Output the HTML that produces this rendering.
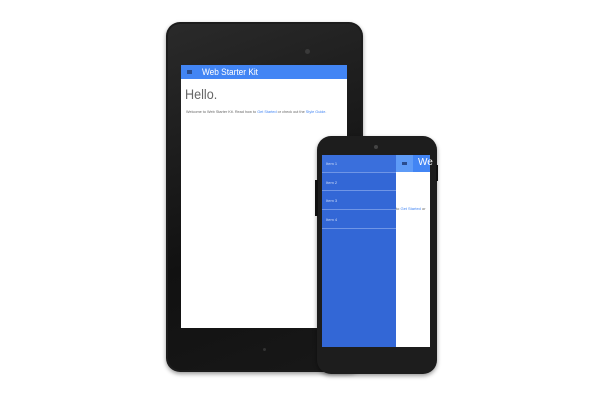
<!DOCTYPE html>
<html><head><style>
*{margin:0;padding:0;box-sizing:border-box}
body{width:600px;height:400px;background:#fff;position:relative;overflow:hidden;font-family:"Liberation Sans",sans-serif}
.a{position:absolute}
</style></head><body>
<!-- tablet -->
<div class="a" style="left:166px;top:22px;width:197px;height:350px;background:#1c1c1c;border-radius:14px;box-shadow:0 2px 4px rgba(0,0,0,.4)"></div>
<div class="a" style="left:168px;top:24px;width:193px;height:346px;background:linear-gradient(160deg,#2a2a2a,#111 60%,#181818);border-radius:12px"></div>
<div class="a" style="left:305px;top:49px;width:5px;height:5px;border-radius:50%;background:#3a3a3a"></div>
<div class="a" style="left:263px;top:348px;width:3px;height:3px;border-radius:50%;background:#333"></div>
<div class="a" style="left:181px;top:65px;width:166px;height:263px;background:#fff"></div>
<div class="a" style="left:181px;top:65px;width:166px;height:14px;background:#4285f4"></div>
<div class="a" style="left:187px;top:70px;width:5px;height:4px;background:#2a4d8f"></div>
<div class="a" style="left:202px;top:66px;font-size:9px;color:#fff;line-height:12px;transform:scaleX(.92);transform-origin:left">Web Starter Kit</div>
<div class="a" style="left:185px;top:86px;font-size:14px;color:#666;line-height:16px;transform:scaleX(.9);transform-origin:left">Hello.</div>
<div class="a" style="left:186px;top:110px;font-size:3.8px;color:#666;white-space:nowrap">Welcome to Web Starter Kit. Read how to <span style="color:#4285f4">Get Started</span> or check out the <span style="color:#4285f4">Style Guide</span>.</div>
<!-- phone -->
<div class="a" style="left:317px;top:136px;width:120px;height:238px;background:#1d1d1d;border-radius:14px;box-shadow:0 2px 4px rgba(0,0,0,.4)"></div>
<div class="a" style="left:315px;top:180px;width:3px;height:36px;background:#111"></div>
<div class="a" style="left:436px;top:165px;width:2px;height:16px;background:#111"></div>
<div class="a" style="left:374px;top:145px;width:4px;height:4px;border-radius:50%;background:#444"></div>
<div class="a" style="left:322px;top:155px;width:108px;height:192px;background:#fff"></div>
<div class="a" style="left:396px;top:155px;width:34px;height:17px;background:#4285f4"></div>
<div class="a" style="left:396px;top:155px;width:17px;height:17px;background:#5e9bf7"></div>
<div class="a" style="left:402px;top:162px;width:5px;height:3px;background:#2a4d8f"></div>
<div class="a" style="left:418px;top:157px;font-size:10px;color:#fff">We</div>
<div class="a" style="left:396px;top:206px;font-size:4px;color:#666;white-space:nowrap">to <span style="color:#4285f4">Get Started</span> or</div>
<div class="a" style="left:322px;top:155px;width:74px;height:192px;background:#3367d6"></div>
<div class="a" style="left:322px;top:155px;width:74px;height:17px;background:#3a6fdc"></div>
<div class="a" style="left:322px;top:172px;width:74px;height:1px;background:#6f95e6"></div>
<div class="a" style="left:322px;top:190px;width:74px;height:1px;background:#6f95e6"></div>
<div class="a" style="left:322px;top:209px;width:74px;height:1px;background:#6f95e6"></div>
<div class="a" style="left:322px;top:228px;width:74px;height:1px;background:#6f95e6"></div>
<div class="a" style="left:326px;top:161px;font-size:4px;color:#cfdcf7">Item 1</div>
<div class="a" style="left:326px;top:180px;font-size:4px;color:#cfdcf7">Item 2</div>
<div class="a" style="left:326px;top:198px;font-size:4px;color:#cfdcf7">Item 3</div>
<div class="a" style="left:326px;top:217px;font-size:4px;color:#cfdcf7">Item 4</div>
</body></html>
